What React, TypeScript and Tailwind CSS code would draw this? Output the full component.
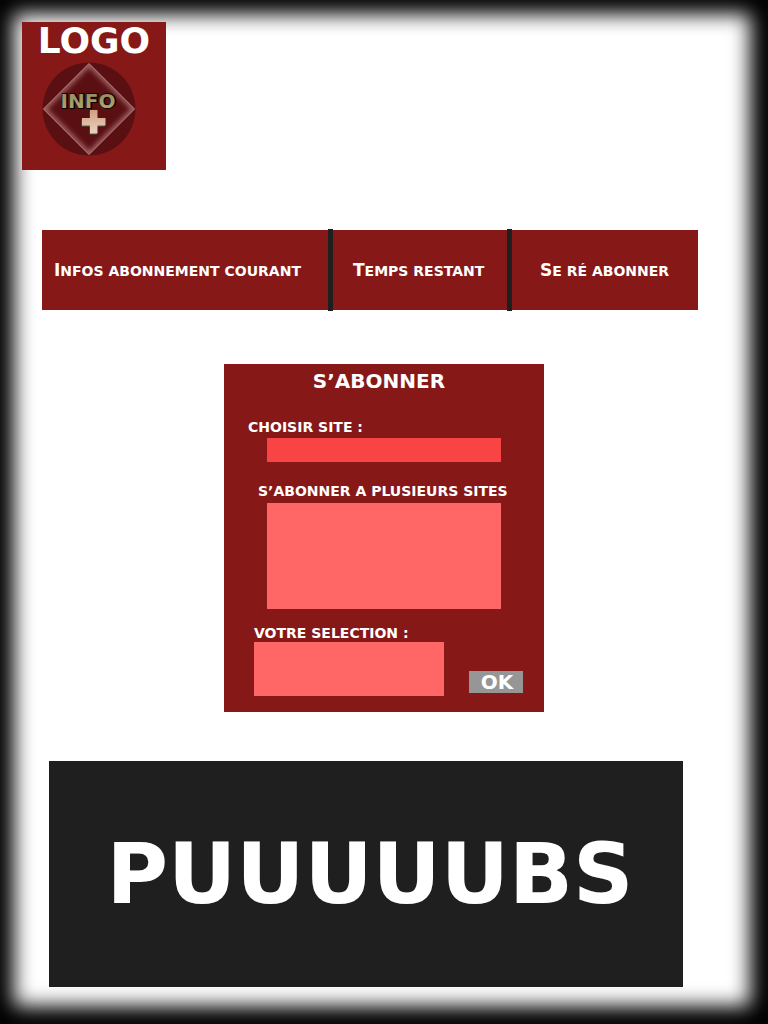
function Emblem() {
  return (
    <svg viewBox="0 0 96 96" className="h-24 w-24" role="img" aria-label="Info +">
      <defs>
        <linearGradient id="gold" x1="0" y1="0" x2="0" y2="1">
          <stop offset="0" stopColor="#8f8a5c" />
          <stop offset="1" stopColor="#b5a878" />
        </linearGradient>
        <linearGradient id="sand" x1="0" y1="0" x2="0" y2="1">
          <stop offset="0" stopColor="#cf9f80" />
          <stop offset="1" stopColor="#ead3c0" />
        </linearGradient>
        <clipPath id="diamond">
          <path d="M48 3.5 93.5 49 48 94.5 2.5 49Z" />
        </clipPath>
        <filter id="glow" x="-20%" y="-20%" width="140%" height="140%">
          <feGaussianBlur stdDeviation="2.4" />
        </filter>
      </defs>
      <circle cx="48" cy="49" r="46.5" fill="#5a1012" />
      <g clipPath="url(#diamond)">
        <path
          d="M48 3.5 93.5 49 48 94.5 2.5 49Z"
          fill="none"
          stroke="#d8a8a8"
          strokeOpacity="0.6"
          strokeWidth="5"
          filter="url(#glow)"
        />
      </g>
      <path d="M48 3.5 93.5 49 48 94.5 2.5 49Z" fill="none" stroke="#b88484" strokeWidth="1" />
      <g fontFamily="'DejaVu Sans', sans-serif" fontWeight="700" fontSize="20">
        <text x="47.5" y="48" textAnchor="middle" fill="#0c0303" stroke="#0c0303" strokeWidth="2">
          INFO
        </text>
        <text x="47" y="48" textAnchor="middle" fill="url(#gold)" aria-hidden="true">
          INFO
        </text>
      </g>
      <path d="M48 51h8v8h8v8h-8v8h-8v-8h-8v-8h8Z" fill="#6b4a44" stroke="#3a1a18" strokeWidth="0.8" />
      <path d="M49 50h7.500v8h8v7.500h-8v8h-7.500v-8h-8v-7.500h8Z" fill="url(#sand)" />
    </svg>
  );
}

const navLink = "flex items-center text-[14px] leading-5 whitespace-nowrap uppercase";
const navText = "inline-block first-letter:text-[17px]";
const label = "text-[14px] leading-[18px] whitespace-nowrap uppercase";
const field = "block appearance-none border-0 outline-none resize-none";

export default function App() {
  return (
    <div className="flex min-h-screen flex-col bg-white pt-[22px] pb-[37px] pl-[22px] font-['DejaVu_Sans',sans-serif] font-bold text-white shadow-[inset_-2px_-2px_20px_16px_#000]">
      <header className="flex h-[148px] w-36 flex-col items-center bg-[#861918]">
        <h1 className="text-[36px] leading-[38px]">LOGO</h1>
        <div className="pr-[10px]">
          <Emblem />
        </div>
      </header>

      <nav className="mt-[60px] mr-[70px] ml-5 grid h-20 grid-cols-[286fr_5px_174fr_5px_186fr] bg-[#861918]">
        <a href="#infos" className={`${navLink} pl-3`}>
          <span className={navText}>Infos abonnement courant</span>
        </a>
        <span className="-my-px bg-[#1f1f1f]" />
        <a href="#temps" className={`${navLink} pl-5`}>
          <span className={navText}>Temps restant</span>
        </a>
        <span className="-my-px bg-[#1f1f1f]" />
        <a href="#reabonner" className={`${navLink} pl-7`}>
          <span className={navText}>Se ré abonner</span>
        </a>
      </nav>

      <form
        className="mt-[54px] mr-[22px] flex w-80 flex-col self-center bg-[#861918] pt-[5px] pb-4"
        onSubmit={(e) => e.preventDefault()}
      >
        <h2 className="pr-[10px] text-center text-[20px] leading-6 uppercase">s’abonner</h2>
        <label htmlFor="site" className={`${label} mt-[25px] ml-6`}>
          choisir site :
        </label>
        <select id="site" className={`${field} mx-[43px] mt-[2px] h-6 bg-[#f84444]`}>
          <option value=""></option>
        </select>
        <label htmlFor="sites" className={`${label} mt-5 ml-[34px]`}>
          s’abonner a plusieurs sites
        </label>
        <textarea id="sites" className={`${field} mx-[43px] mt-[3px] h-[106px] bg-[#ff6666]`} />
        <label htmlFor="selection" className={`${label} mt-[15px] ml-[30px]`}>
          votre selection :
        </label>
        <div className="mr-[21px] ml-[30px] flex items-end justify-between">
          <textarea id="selection" className={`${field} h-[54px] w-[190px] bg-[#ff6666]`} />
          <button type="submit" className="mb-[3px] h-[22px] w-[54px] bg-[#969696] pl-[2px] text-[20px] leading-[22px]">
            OK
          </button>
        </div>
      </form>

      <section className="mt-[49px] mr-[85px] ml-[27px] flex h-[226px] items-center justify-center bg-[#1f1f1f]">
        <p className="pl-2 text-[84px] leading-none">PUUUUUBS</p>
      </section>
    </div>
  );
}
